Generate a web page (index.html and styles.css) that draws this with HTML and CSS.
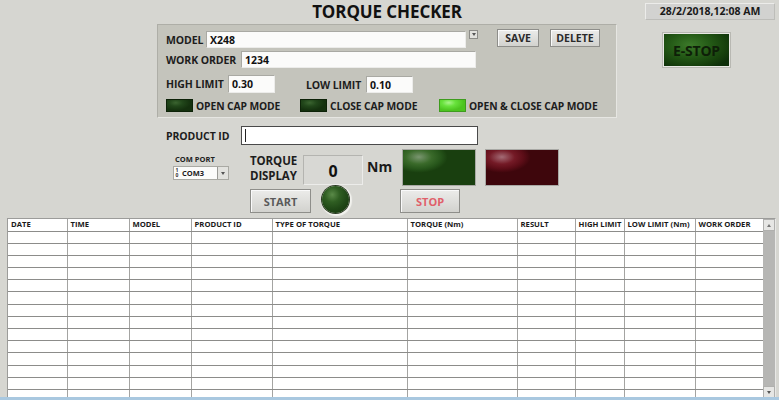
FILE: index.html
```html
<!DOCTYPE html>
<html>
<head>
<meta charset="utf-8">
<link rel="stylesheet" href="styles.css">
</head>
<body>
<div class="screen">
  <div class="top">
    <div class="main">
      <h1 class="title">TORQUE CHECKER</h1>
      <div class="panel">
        <div class="prow r1">
          <span class="lbl">MODEL</span>
          <span class="field f-model">X248</span>
          <span class="ddbtn"><span class="tri"></span></span>
          <span class="btn b-save">SAVE</span>
          <span class="btn b-delete">DELETE</span>
        </div>
        <div class="prow r2">
          <span class="lbl">WORK ORDER</span>
          <span class="field f-work">1234</span>
        </div>
        <div class="prow r3">
          <span class="lbl">HIGH LIMIT</span>
          <span class="field f-high">0.30</span>
          <span class="lbl l-low">LOW LIMIT</span>
          <span class="field f-low">0.10</span>
        </div>
        <div class="prow r4">
          <span class="led"></span><span class="lbl led-lbl w1">OPEN CAP MODE</span>
          <span class="led"></span><span class="lbl led-lbl w2">CLOSE CAP MODE</span>
          <span class="led on"></span><span class="lbl led-lbl">OPEN &amp; CLOSE CAP MODE</span>
        </div>
      </div>
      <div class="product">
        <span class="lbl">PRODUCT ID</span>
        <span class="field f-product"><span class="caret"></span></span>
      </div>
      <div class="controls">
        <div class="comport">
          <span class="small-lbl">COM PORT</span>
          <span class="select"><span class="io"><span>1</span><span>0</span></span><span class="sel-text">COM3</span><span class="sel-btn"><span class="tri"></span></span></span>
        </div>
        <div class="torque">
          <div class="trow1">
            <span class="lbl t-lbl">TORQUE<br>DISPLAY</span>
            <span class="display">0</span>
            <span class="unit">Nm</span>
            <span class="lamp green"></span>
            <span class="lamp red"></span>
          </div>
          <div class="trow2">
            <span class="btn b-start">START</span>
            <span class="round-led"></span>
            <span class="btn b-stop">STOP</span>
          </div>
        </div>
      </div>
    </div>
    <div class="side">
      <div class="clock">28/2/2018,12:08 AM</div>
      <div class="estop">E-STOP</div>
    </div>
  </div>
  <div class="grid-area">
    <div class="tbl-wrap">
      <table class="log">
        <colgroup>
          <col class="c1"><col class="c2"><col class="c2"><col class="c4"><col class="c5"><col class="c6"><col class="c7"><col class="c8"><col class="c9"><col class="c10">
        </colgroup>
        <thead>
          <tr><th>DATE</th><th>TIME</th><th>MODEL</th><th>PRODUCT ID</th><th>TYPE OF TORQUE</th><th>TORQUE (Nm)</th><th>RESULT</th><th>HIGH LIMIT</th><th>LOW LIMIT (Nm)</th><th>WORK ORDER</th></tr>
        </thead>
        <tbody>
          <tr><td></td><td></td><td></td><td></td><td></td><td></td><td></td><td></td><td></td><td></td></tr>
          <tr><td></td><td></td><td></td><td></td><td></td><td></td><td></td><td></td><td></td><td></td></tr>
          <tr><td></td><td></td><td></td><td></td><td></td><td></td><td></td><td></td><td></td><td></td></tr>
          <tr><td></td><td></td><td></td><td></td><td></td><td></td><td></td><td></td><td></td><td></td></tr>
          <tr><td></td><td></td><td></td><td></td><td></td><td></td><td></td><td></td><td></td><td></td></tr>
          <tr><td></td><td></td><td></td><td></td><td></td><td></td><td></td><td></td><td></td><td></td></tr>
          <tr><td></td><td></td><td></td><td></td><td></td><td></td><td></td><td></td><td></td><td></td></tr>
          <tr><td></td><td></td><td></td><td></td><td></td><td></td><td></td><td></td><td></td><td></td></tr>
          <tr><td></td><td></td><td></td><td></td><td></td><td></td><td></td><td></td><td></td><td></td></tr>
          <tr><td></td><td></td><td></td><td></td><td></td><td></td><td></td><td></td><td></td><td></td></tr>
          <tr><td></td><td></td><td></td><td></td><td></td><td></td><td></td><td></td><td></td><td></td></tr>
          <tr><td></td><td></td><td></td><td></td><td></td><td></td><td></td><td></td><td></td><td></td></tr>
          <tr><td></td><td></td><td></td><td></td><td></td><td></td><td></td><td></td><td></td><td></td></tr>
          <tr><td></td><td></td><td></td><td></td><td></td><td></td><td></td><td></td><td></td><td></td></tr>
        </tbody>
      </table>
    </div>
    <div class="scrollbar">
      <span class="sb-btn"><span class="tri up"></span></span>
      <span class="sb-track"></span>
      <span class="sb-btn"><span class="tri"></span></span>
    </div>
  </div>
  <div class="status-line"></div>
</div>
</body>
</html>
```

FILE: styles.css
```css
* { box-sizing: border-box; }
html, body { margin: 0; padding: 0; }
body {
  width: 779px;
  height: 400px;
  overflow: hidden;
  background: #d6d6d1;
  font-family: "Open Sans", "Liberation Sans", sans-serif;
  font-weight: 700;
  color: #1a1a1a;
}
.screen { width: 779px; height: 400px; display: flex; flex-direction: column; }

.top { display: flex; height: 218px; flex: none; }
.main { width: 617px; padding-left: 157px; display: flex; flex-direction: column; }
.title {
  margin: 0;
  height: 24px;
  font-size: 17px;
  line-height: 24px;
  text-align: center;
  font-weight: 700;
  color: #111;
  letter-spacing: -0.1px;
}

.panel {
  width: 460px;
  height: 94px;
  background: #c4c4bc;
  border: 1px solid #aeaea7;
  border-right-color: #e6e6e2;
  border-bottom-color: #e6e6e2;
  padding: 4px 0 0 8px;
  display: flex;
  flex-direction: column;
}
.prow { display: flex; align-items: center; }
.lbl { font-size: 10.5px; color: #1d1d1d; white-space: nowrap; letter-spacing: -0.1px; }
.field {
  display: flex;
  align-items: center;
  background: #fbfbfa;
  border: 1px solid #a9a9a3;
  border-right-color: #ececea;
  border-bottom-color: #ececea;
  font-size: 10.5px;
  padding-left: 3px;
  color: #111;
}
.r1 { height: 19px; }
.r1 .lbl { width: 40px; padding-top: 3px; }
.f-model { width: 260px; height: 17px; align-self: flex-end; }
.ddbtn {
  width: 9px; height: 9px; margin-left: 3px; align-self: flex-start; margin-top: 1px;
  background: #e2e2de; border: 1px solid #8c8c88; display: flex; align-items: center; justify-content: center;
}
.tri { width: 0; height: 0; border-left: 2.5px solid transparent; border-right: 2.5px solid transparent; border-top: 3px solid #555; }
.tri.up { border-top: 0; border-bottom: 3px solid #777; }
.btn {
  display: flex; align-items: center; justify-content: center;
  background: linear-gradient(#ececea, #d2d2ce);
  border: 1px solid #8e8e8a;
  box-shadow: inset 1px 1px 0 #fafafa;
  font-size: 10.5px;
  color: #2a2a2a;
}
.b-save { width: 42px; height: 18px; margin-left: 19px; align-self: flex-start; }
.b-delete { width: 50px; height: 18px; margin-left: 11px; align-self: flex-start; }

.r2 { height: 17px; margin-top: 3px; }
.r2 .lbl { width: 75px; }
.f-work { width: 235px; height: 17px; }

.r3 { height: 18px; margin-top: 7px; }
.r3 > .lbl:first-child { width: 62px; }
.f-high { width: 47px; height: 18px; }
.l-low { margin-left: 31px; width: 60px; padding-top: 2px; }
.f-low { width: 47px; height: 17px; align-self: flex-end; }

.r4 { height: 13px; margin-top: 6px; }
.led {
  width: 27px; height: 13px;
  background: radial-gradient(ellipse 60% 70% at 35% 25%, #3b6430 0%, #21461a 45%, #14300e 100%);
  border: 1px solid #0d2208;
}
.led.on {
  background: radial-gradient(ellipse 60% 70% at 35% 25%, #a8f48a 0%, #68e23c 45%, #4cc41f 100%);
  border-color: #3e9c1e;
}
.led-lbl { margin-left: 3px; font-size: 10.3px; }
.w1 { width: 104px; }
.w2 { width: 109px; }

.product { display: flex; align-items: center; margin-top: 8px; height: 19px; padding-left: 9px; }
.product .lbl { width: 75px; }
.f-product { width: 237px; height: 19px; border: 1px solid #4a4a4a; background: #fff; }
.caret { width: 1px; height: 13px; background: #222; }

.controls { display: flex; margin-top: 4px; padding-left: 16px; }
.comport { width: 56px; display: flex; flex-direction: column; padding-top: 5px; }
.small-lbl { font-size: 7.5px; padding-left: 2px; color: #222; line-height: 11px; }
.select {
  display: flex; align-items: center; height: 14px; width: 56px;
  background: #fbfbfa; border: 1px solid #a9a9a3; margin-top: 1px;
}
.io { display: flex; flex-direction: column; font-size: 5px; line-height: 5px; width: 6px; align-items: center; color: #333; }
.sel-text { font-size: 7.5px; margin-left: 2px; flex: 1; }
.sel-btn { width: 11px; height: 12px; background: #e2e2de; border-left: 1px solid #9a9a96; display: flex; align-items: center; justify-content: center; }

.torque { margin-left: 21px; display: flex; flex-direction: column; }
.trow1 { display: flex; align-items: flex-start; height: 37px; }
.t-lbl { width: 53px; font-size: 11.5px; line-height: 15px; margin-top: 4px; }
.display {
  width: 60px; height: 30px; margin-top: 6px;
  background: #d8d8d4;
  border: 1px solid #b4b4b0;
  border-right-color: #ececea; border-bottom-color: #ececea;
  display: flex; align-items: center; justify-content: center;
  padding-top: 2px;
  font-size: 16px; color: #111;
}
.unit { width: 39px; padding-left: 4px; font-size: 14px; margin-top: 8px; color: #1a1a1a; }
.lamp { width: 74px; height: 37px; border: 1px solid #a8a8a4; }
.lamp.green { background: radial-gradient(ellipse 40% 45% at 22% 20%, #7a9670 0%, #3a6a2a 45%, #27561b 75%, #193f0f 100%); }
.lamp.red { margin-left: 9px; background: radial-gradient(ellipse 40% 45% at 22% 20%, #a46c76 0%, #741a26 45%, #5c0d17 75%, #3e060c 100%); }

.trow2 { display: flex; align-items: flex-start; margin-top: 3px; }
.b-start { width: 61px; height: 24px; color: #5a5a5a; font-size: 11px; }
.round-led {
  width: 27px; height: 27px; margin-left: 11px; margin-top: -3px; border-radius: 50%;
  background: radial-gradient(circle at 38% 32%, #5a8a48 0%, #2f5e22 30%, #1f4716 60%, #143209 100%);
  box-shadow: 0 0 0 1px #2a3a22, 1px 1px 1px 2px #f2f2ee;
}
.b-stop { width: 60px; height: 24px; margin-left: 51px; color: #e0606a; font-size: 11px; }

.side { display: flex; flex-direction: column; margin-left: 28px; }
.clock {
  width: 130px; height: 17px; margin-top: 3px;
  background: #d2d2d0; border: 1px solid #ececea;
  border-right-color: #bdbdb9; border-bottom-color: #bdbdb9;
  font-size: 10.5px; line-height: 15px; text-align: center; color: #1a1a1a;
}
.estop {
  width: 67px; height: 34px; margin-top: 13px; margin-left: 18px;
  background: radial-gradient(ellipse 70% 80% at 40% 35%, #3c7a2a 0%, #245a16 45%, #16400c 80%, #0e300a 100%);
  border: 1px solid #e8e8e4;
  box-shadow: 0 0 0 1px #b8b8b2;
  display: flex; align-items: center; justify-content: center;
  font-size: 14px; color: #0e1f08; letter-spacing: -0.2px;
}

.grid-area { display: flex; height: 179px; flex: none; padding-left: 7px; }
.tbl-wrap { width: 756px; height: 179px; overflow: hidden; border-top: 1px solid #9c9c9a; border-left: 1px solid #9c9c9a; background: #fff; }
.log { border-collapse: collapse; table-layout: fixed; width: 755px; }
.c1 { width: 59px; }
.c2 { width: 62px; }
.c4 { width: 81px; }
.c5 { width: 135px; }
.c6 { width: 110px; }
.c7 { width: 58px; }
.c8 { width: 49px; }
.c9 { width: 71px; }
.c10 { width: 68px; }
.log th {
  height: 12px; padding: 0 0 0 3px; text-align: left; font-size: 7.7px; line-height: 11px;
  border-right: 1px solid #a4a4a2; border-bottom: 1px solid #8c8c8a; color: #1a1a1a; white-space: nowrap; overflow: hidden;
}
.log td { height: 12.2px; padding: 0; border-right: 1px solid #a4a4a2; border-bottom: 1px solid #8c8c8a; }
.scrollbar { width: 12px; height: 179px; display: flex; flex-direction: column; border-top: 1px solid #9c9c9a; border-right: 1px solid #e8e8e6; box-sizing: content-box; }
.sb-btn { height: 12px; background: #e6e6e4; border: 1px solid #b0b0ae; display: flex; align-items: center; justify-content: center; }
.sb-track { flex: 1; background: #b6b6b4; }
.status-line { flex: 1; background: #a9c8e0; }
```
